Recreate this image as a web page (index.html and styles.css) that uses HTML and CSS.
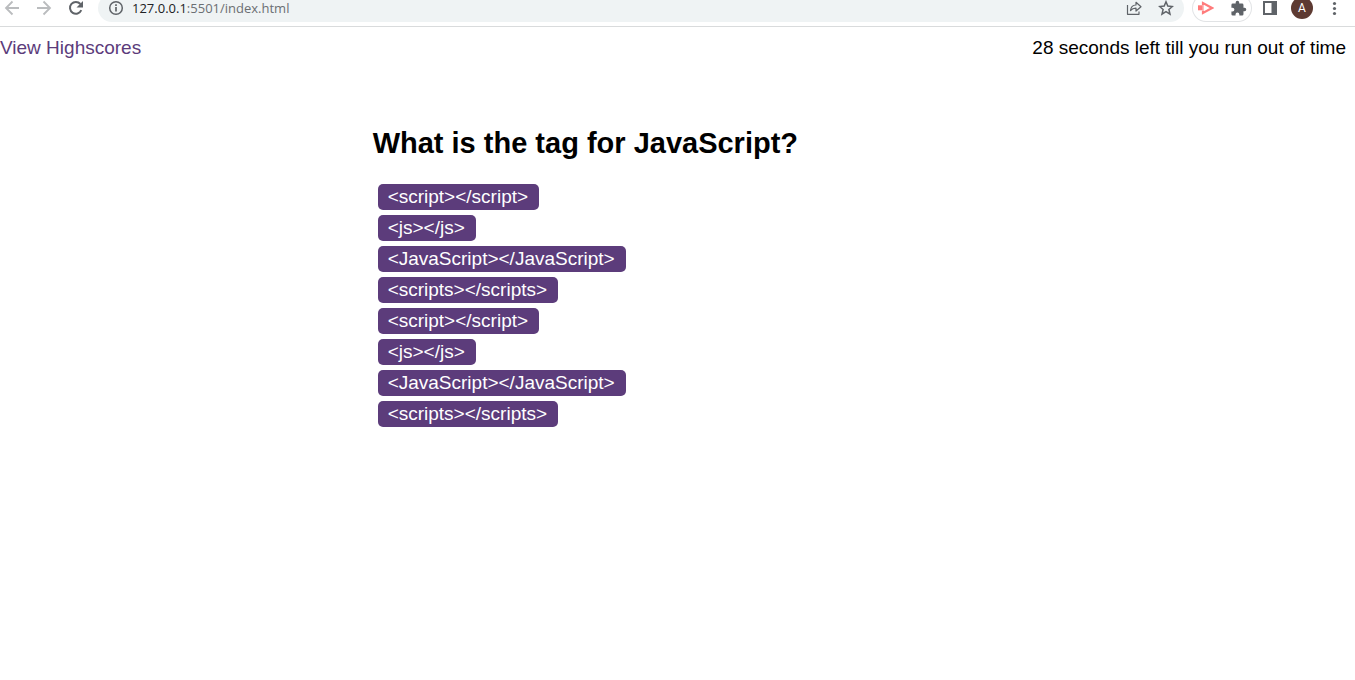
FILE: index.html
```html
<!DOCTYPE html>
<html lang="en">
<head>
<meta charset="utf-8">
<meta name="viewport" content="width=device-width, initial-scale=1">
<title>Code Quiz</title>
<link rel="stylesheet" href="styles.css">
</head>
<body>
<div class="browser-bar">
  <div class="toolbar">
    <button class="tool muted" type="button" aria-label="Back"><svg width="16" height="16" viewBox="0 0 16 16"><path d="M15 8H2M8.500 1.500 2 8l6.500 6.500" fill="none" stroke="currentColor" stroke-width="1.800"/></svg></button>
    <button class="tool muted" type="button" aria-label="Forward"><svg width="16" height="16" viewBox="0 0 16 16"><path d="M1 8h13M7.500 1.500 14 8l-6.500 6.500" fill="none" stroke="currentColor" stroke-width="1.800"/></svg></button>
    <button class="tool" type="button" aria-label="Reload"><svg width="16" height="16" viewBox="0 0 16 16"><path d="M13.300 10.200A5.900 5.900 0 1 1 12.400 4" fill="none" stroke="currentColor" stroke-width="2"/><path d="M15 1v6.500H8.500z" fill="currentColor"/></svg></button>
    <div class="address">
      <button class="info" type="button" aria-label="Site information"><svg width="16" height="16" viewBox="0 0 16 16"><circle cx="8" cy="8" r="6.300" fill="none" stroke="currentColor" stroke-width="1.500"/><path d="M8 7v4.500M8 4.300v1.600" stroke="currentColor" stroke-width="1.700"/></svg></button>
      <div class="url"><span class="host">127.0.0.1</span>:5501/index.html</div>
      <button class="tool" type="button" aria-label="Share"><svg width="18" height="16" viewBox="0 0 18 16"><path d="M2.500 5v9.300h11.500V11.500M5.500 10.500c.5-4 2.500-5.500 5.500-5.500V2.300l5 4.400-5 4.300V8.200C8.500 8.200 7 8.700 5.500 10.500z" fill="none" stroke="currentColor" stroke-width="1.200" stroke-linejoin="round"/></svg></button>
      <button class="tool" type="button" aria-label="Bookmark"><svg width="16" height="16" viewBox="0 0 16 16"><path d="m8 1.800 1.800 4.300 4.600.4-3.500 3 1.100 4.600-4-2.500-4 2.500 1.100-4.600-3.500-3 4.600-.4z" fill="none" stroke="currentColor" stroke-width="1.500"/></svg></button>
    </div>
    <div class="extensions">
      <button class="extension recorder" type="button" aria-label="Recorder"><svg width="16" height="16" viewBox="0 0 16 16"><path d="M0 5.300h4.500v5H0z" fill="currentColor"/><path d="M5 5V3l9 5-9 5v-2" fill="none" stroke="currentColor" stroke-width="2.200"/><path d="M5 5v6" stroke="currentColor" stroke-width="1"/></svg></button>
      <button class="extension" type="button" aria-label="Extensions"><svg width="17" height="17" viewBox="0 0 24 24"><path d="M20.500 11H19V7a2 2 0 0 0-2-2h-4V3.500a2.500 2.500 0 0 0-5 0V5H4a2 2 0 0 0-2 2v3.800h1.500a2.700 2.700 0 0 1 0 5.400H2V20a2 2 0 0 0 2 2h3.800v-1.500a2.700 2.700 0 0 1 5.400 0V22H17a2 2 0 0 0 2-2v-4h1.500a2.500 2.500 0 0 0 0-5z" fill="currentColor"/></svg></button>
    </div>
    <button class="tool" type="button" aria-label="Side panel"><svg width="16" height="16" viewBox="0 0 16 16"><path d="M1 1h14v14H1zM3 3v10h6.500V3z" fill="currentColor" fill-rule="evenodd"/></svg></button>
    <button class="tool" type="button" aria-label="Profile"><span class="avatar">A</span></button>
    <button class="tool" type="button" aria-label="Menu"><svg width="16" height="16" viewBox="0 0 16 16"><g fill="currentColor"><circle cx="8.500" cy="3.500" r="1.600"/><circle cx="8.500" cy="8.500" r="1.600"/><circle cx="8.500" cy="13.500" r="1.600"/></g></svg></button>
  </div>
</div>
<header class="status">
  <a class="scores" href="#highscores">View Highscores</a>
  <div class="timer">28 seconds left till you run out of time</div>
</header>
<main class="quiz">
  <h1 class="question">What is the tag for JavaScript?</h1>
  <div class="answers">
    <button class="answer" type="button">&lt;script&gt;&lt;/script&gt;</button>
    <button class="answer" type="button">&lt;js&gt;&lt;/js&gt;</button>
    <button class="answer" type="button">&lt;JavaScript&gt;&lt;/JavaScript&gt;</button>
    <button class="answer" type="button">&lt;scripts&gt;&lt;/scripts&gt;</button>
    <button class="answer" type="button">&lt;script&gt;&lt;/script&gt;</button>
    <button class="answer" type="button">&lt;js&gt;&lt;/js&gt;</button>
    <button class="answer" type="button">&lt;JavaScript&gt;&lt;/JavaScript&gt;</button>
    <button class="answer" type="button">&lt;scripts&gt;&lt;/scripts&gt;</button>
  </div>
</main>
</body>
</html>
```
FILE: styles.css
```css
* {
  box-sizing: border-box;
}

body {
  margin: 0;
  background: #fff;
  color: #000;
  font-family: "Liberation Sans", Arial, sans-serif;
  font-size: 19px;
  line-height: 22px;
}

button {
  margin: 0;
  padding: 0;
  border: 0;
  background: none;
  color: inherit;
  font: inherit;
}

svg {
  display: block;
}

.browser-bar {
  display: flex;
  align-items: flex-end;
  height: 27px;
  overflow: hidden;
  border-bottom: 1px solid #d9dbdc;
}

.toolbar {
  display: flex;
  flex: 1;
  align-items: center;
  height: 36px;
  padding-right: 5px;
  margin-left: -4px;
  color: #5f6368;
}

.tool,
.extension {
  display: flex;
  flex: none;
  align-items: center;
  justify-content: center;
  width: 32px;
  height: 28px;
}

.muted {
  color: #babcbe;
}

.address {
  display: flex;
  flex: 1;
  align-items: center;
  height: 28px;
  margin: 0 8px 0 6px;
  padding: 0 2px 0 10px;
  border-radius: 14px;
  background: #eff3f4;
}

.url {
  flex: 1;
  padding-left: 8px;
  color: #6b6f73;
  font-family: "Open Sans", "Noto Sans", sans-serif;
  font-size: 13px;
  line-height: 18px;
}

.host {
  color: #202124;
}

.extensions {
  display: flex;
  gap: 4px;
  margin-right: 2px;
  border-radius: 14px;
  box-shadow: inset 0 0 0 1px #e1e3e5;
}

.extension {
  width: 28px;
}

.recorder {
  color: #ff7b7b;
}

.avatar {
  width: 22px;
  height: 22px;
  border-radius: 50%;
  background: #5d3a32;
  color: #fff;
  font-family: Roboto, sans-serif;
  font-size: 12px;
  line-height: 22px;
  text-align: center;
}

/* Quiz page */
.status {
  display: flex;
  justify-content: space-between;
  padding: 10px 9px 0 0;
}

.scores {
  color: #5c3c7b;
  text-decoration: none;
}

.quiz {
  width: 45%;
  margin: 64px auto 0;
}

.question {
  margin: 0;
  font-size: 29px;
  line-height: 40px;
}

.answers {
  display: flex;
  flex-direction: column;
  align-items: flex-start;
  gap: 5px;
  padding: 21px 5px;
}

.answer {
  padding: 2px 11px 2px 10px;
  border-radius: 5px;
  background: #5c3c7b;
  color: #fff;
}
```
